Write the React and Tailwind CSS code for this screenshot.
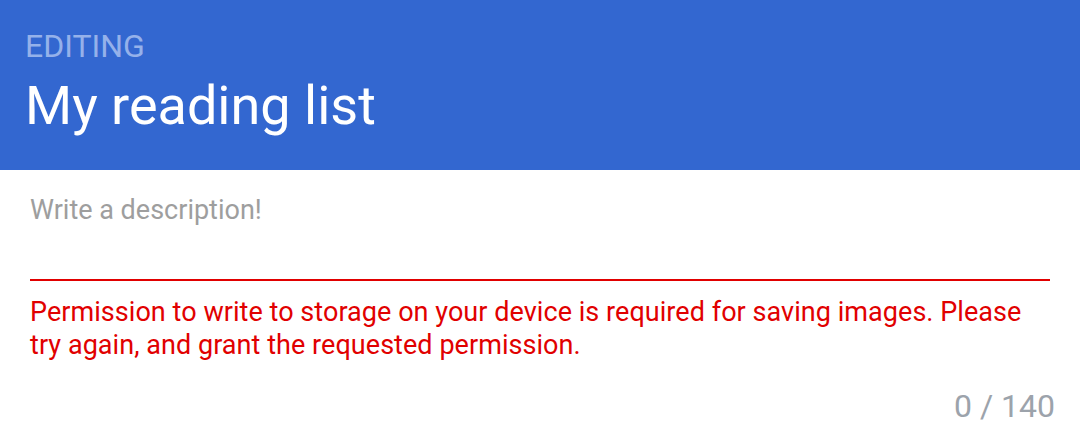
import React from 'react';

const App = () => {
  return (
    <div className="w-[1080px] h-[427px] bg-white overflow-hidden" style={{ fontFamily: 'Roboto, "Noto Sans", sans-serif' }}>
      <div className="h-[170px] bg-[#3367d0] px-[25px] pt-[27px]">
        <p className="text-[32px] leading-[38px] text-[#95b1ea]">EDITING</p>
        <h1 className="mt-[6px] text-[54px] leading-[70px] text-white">My reading list</h1>
      </div>
      <div className="px-[30px] pt-[22px]">
        <p className="text-[27px] leading-[36px] text-[#9e9e9e]">Write a description!</p>
        <div className="mt-[51px] h-[2px] bg-[#e10000]" />
        <p className="mt-[15px] text-[27px] leading-[33px] tracking-[0.05px] text-[#e10000]">
          Permission to write to storage on your device is required for saving images. Please try again, and grant the requested permission.
        </p>
        <p className="mt-[24px] mr-[-5px] text-right text-[32px] leading-[40px] text-[#9ca3ab]">0 / 140</p>
      </div>
    </div>
  );
};

export default App;
